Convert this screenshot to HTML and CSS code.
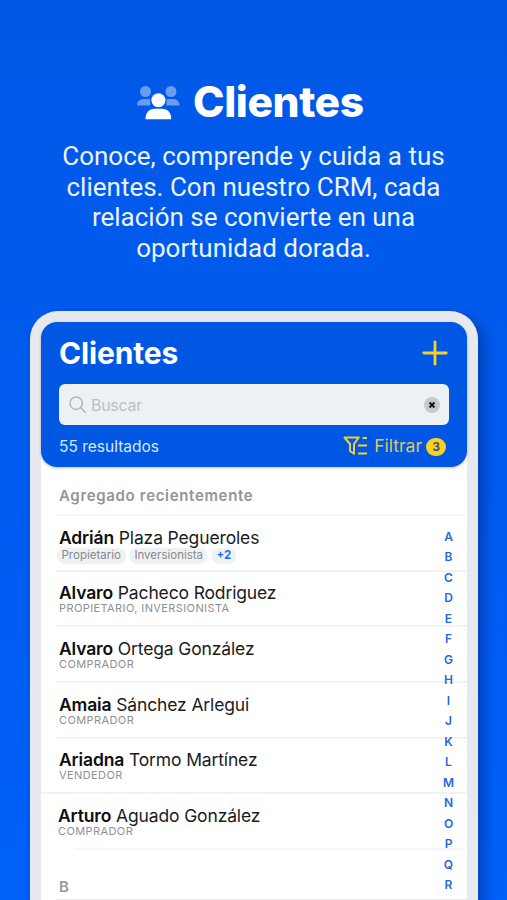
FILE: index.html
```html
<!DOCTYPE html>
<html lang="es">
<head>
  <meta charset="UTF-8" />
  <title>Clientes</title>
  <link rel="stylesheet" href="styles.css">
</head>
<body>

<div class="promo">
  <div class="promo-title">
    <svg class="people" width="43" height="34" viewBox="0 0 43 34">
      <g fill="#6b9cf0">
        <circle cx="8.500" cy="5.500" r="5.500" />
        <circle cx="34" cy="5.500" r="5.500" />
        <path d="M0 19.600c0-4.200 2.800-6.600 6.800-6.600h6.400v6.600z" />
        <path d="M42.600 19.600c0-4.200-2.800-6.600-6.800-6.600h-6.400v6.600z" />
      </g>
      <circle cx="21.400" cy="14.300" r="8" fill="#0059e8" />
      <circle cx="21.400" cy="14.300" r="7" fill="#fff" />
      <path d="M8.500 33.200c0-6.500 3.600-10.400 9.400-10.400h7c5.800 0 9.400 3.900 9.400 10.400z" fill="#fff" />
    </svg>
    <h1>Clientes</h1>
  </div>
  <p class="promo-text">Conoce, comprende y cuida a tus<br>clientes. Con nuestro CRM, cada<br>relación se convierte en una<br>oportunidad dorada.</p>
</div>

<div class="phone">
  <div class="header">
    <div class="header-top">
      <h2>Clientes</h2>
      <svg width="26" height="26" viewBox="0 0 26 26" fill="none" stroke="#f8cf2b" stroke-width="2.800" stroke-linecap="round">
        <path d="M13 1.800v22.400M1.800 13h22.400" />
      </svg>
    </div>

    <div class="search">
      <svg width="18" height="18" viewBox="0 0 18 18" fill="none" stroke="#b2b6b9" stroke-width="1.500" stroke-linecap="round">
        <circle cx="7.200" cy="7.200" r="6.200" />
        <path d="M11.800 11.800l4.700 4.700" />
      </svg>
      <span class="placeholder">Buscar</span>
      <svg width="16" height="16" viewBox="0 0 16 16">
        <circle cx="8" cy="8" r="8" fill="#c8cbce" />
        <path d="M5.500 5.500l5 5M10.500 5.500l-5 5" stroke="#111" stroke-width="1.900" />
      </svg>
    </div>

    <div class="header-bottom">
      <span class="results">55 resultados</span>
      <div class="filter">
        <svg width="25" height="20" viewBox="0 0 25 20" fill="none" stroke="#f0cd3c" stroke-width="2">
          <path d="M1.500 1.500h14.300l-4.800 6.500v9.800l-4-2.800v-7z" stroke-linejoin="round" />
          <path d="M19.500 1.900h4.500M15 9.600h9M15 17.500h9" />
        </svg>
        <span class="filter-label">Filtrar</span>
        <span class="filter-count">3</span>
      </div>
    </div>
  </div>

  <div class="list">
    <div class="section-title">Agregado recientemente</div>

    <div class="client">
      <div class="name"><b>Adrián</b> Plaza Pegueroles</div>
      <div class="tags">
        <span class="tag">Propietario</span>
        <span class="tag">Inversionista</span>
        <span class="tag more">+2</span>
      </div>
    </div>
    <div class="client">
      <div class="name"><b>Alvaro</b> Pacheco Rodriguez</div>
      <div class="role">PROPIETARIO, INVERSIONISTA</div>
    </div>
    <div class="client">
      <div class="name"><b>Alvaro</b> Ortega González</div>
      <div class="role">COMPRADOR</div>
    </div>
    <div class="client">
      <div class="name"><b>Amaia</b> Sánchez Arlegui</div>
      <div class="role">COMPRADOR</div>
    </div>
    <div class="client">
      <div class="name"><b>Ariadna</b> Tormo Martínez</div>
      <div class="role">VENDEDOR</div>
    </div>
    <div class="client last">
      <div class="name"><b>Arturo</b> Aguado González</div>
      <div class="role">COMPRADOR</div>
    </div>

    <div class="letter-title">B</div>

    <!-- alphabet index over the list -->
    <div class="index">
      <span>A</span><span>B</span><span>C</span><span>D</span><span>E</span><span>F</span>
      <span>G</span><span>H</span><span>I</span><span>J</span><span>K</span><span>L</span>
      <span>M</span><span>N</span><span>O</span><span>P</span><span>Q</span><span>R</span>
    </div>
  </div>
</div>

</body>
</html>
```
FILE: styles.css
```css
* {
  box-sizing: border-box;
}

body {
  margin: 0;
  height: 900px;
  overflow: hidden;
  font-family: Inter, "Liberation Sans", sans-serif;
  background: linear-gradient(#0058e6, #0060fa);
  display: flex;
  flex-direction: column;
}

h1, h2, p {
  margin: 0;
}

svg {
  display: block;
  flex: none;
}

/* Promo text */
.promo {
  height: 311px;
  flex: none;
  padding-top: 76px;
  color: white;
}

.promo-title {
  display: flex;
  height: 52px;
  padding-left: 136.500px;
  gap: 13.500px;
}

.people {
  margin-top: 10px;
}

h1 {
  font-size: 42.500px;
  line-height: 51px;
  font-weight: 800;
  letter-spacing: -0.4px;
  white-space: nowrap;
}

.promo-text {
  margin-top: 13px;
  font-family: Roboto, sans-serif;
  font-size: 26px;
  line-height: 30.500px;
  text-align: center;
  color: #eaf3ff;
  white-space: nowrap;
}

/* Phone */
.phone {
  width: 448px;
  flex: 1;
  min-height: 0;
  margin-left: 30px;
  border: 11px solid #e7e9ee;
  border-bottom: 0;
  border-radius: 28px 28px 0 0;
  background: white;
  box-shadow: 6px 6px 14px rgba(0, 20, 90, 0.4);
}

.header {
  height: 145px;
  padding: 15px 18px 0;
  border-radius: 16px;
  background: #0057e4;
  box-shadow: 0 1px 3px rgba(0, 0, 60, 0.25);
}

.header-top {
  display: flex;
  justify-content: space-between;
  align-items: center;
  height: 32px;
  padding-right: 1px;
}

h2 {
  font-size: 30px;
  line-height: 30px;
  font-weight: 700;
  letter-spacing: -0.15px;
  margin-top: -1px;
  color: white;
}

.search {
  display: flex;
  align-items: center;
  height: 41px;
  margin-top: 15px;
  padding: 0 9px 0 10px;
  border-radius: 6px;
  background: #eef1f4;
}

.placeholder {
  flex: 1;
  margin-left: 4px;
  font-size: 16px;
  letter-spacing: -0.3px;
  color: #bbbfc2;
}

.header-bottom {
  display: flex;
  justify-content: space-between;
  align-items: center;
  height: 42px;
  padding-right: 3px;
}

.results {
  font-size: 15.500px;
  color: #d6e6ff;
}

.filter {
  display: flex;
  align-items: center;
}

.filter-label {
  margin: -1px 4px 0 6px;
  font-size: 17.500px;
  color: #ddc958;
}

.filter-count {
  width: 20px;
  height: 18px;
  margin-top: 2px;
  border-radius: 9px;
  background: #fbd024;
  color: #39536b;
  font-size: 12px;
  line-height: 18px;
  font-weight: 700;
  text-align: center;
}

/* Client list */
.list {
  position: relative;
  height: 433px;
  overflow: hidden;
}

.section-title {
  height: 49px;
  margin-left: 15px;
  padding-left: 3px;
  border-bottom: 2px solid #f5f6f7;
  font-size: 15px;
  line-height: 58px;
  font-weight: 600;
  letter-spacing: 0.67px;
  color: #929496;
}

.client {
  height: 55.700px;
  margin-left: 15px;
  padding: 11.500px 0 0 3px;
  border-bottom: 2px solid #f1f2f4;
}

.client:nth-of-type(6) {
  margin-left: 0;
  padding-left: 18px;
}

.client.last {
  padding-left: 2px;
  border-bottom: 0;
}

.client.last::after {
  content: "";
  display: block;
  height: 2px;
  margin: 12px 2px 0 16px;
  background: #f5f6f7;
}

.name {
  font-size: 17.500px;
  line-height: 20px;
  letter-spacing: -0.14px;
  color: #1b1b1d;
  white-space: nowrap;
}

.name b {
  font-weight: 600;
  color: #0d0d0e;
}

.role {
  font-size: 11px;
  line-height: 10px;
  letter-spacing: 0.4px;
  color: #8e9092;
}

.tags {
  display: flex;
  gap: 3.500px;
  margin-left: -2.500px;
}

.tag {
  height: 16px;
  padding: 0 5px;
  border-radius: 8px;
  background: #eff2f4;
  font-size: 11.500px;
  line-height: 14px;
  color: #85898d;
}

.tag.more {
  font-weight: 700;
  color: #1f6df5;
}

.letter-title {
  height: 51px;
  margin-left: 15px;
  padding-left: 3px;
  border-bottom: 2px solid #e8e9eb;
  font-size: 15px;
  line-height: 74px;
  font-weight: 600;
  color: #999b9d;
}

.index {
  position: absolute;
  top: 60px;
  right: 7.500px;
  width: 22px;
  display: flex;
  flex-direction: column;
  font-size: 12px;
  line-height: 20.480px;
  font-weight: 600;
  text-align: center;
  color: #2467df;
}
```
